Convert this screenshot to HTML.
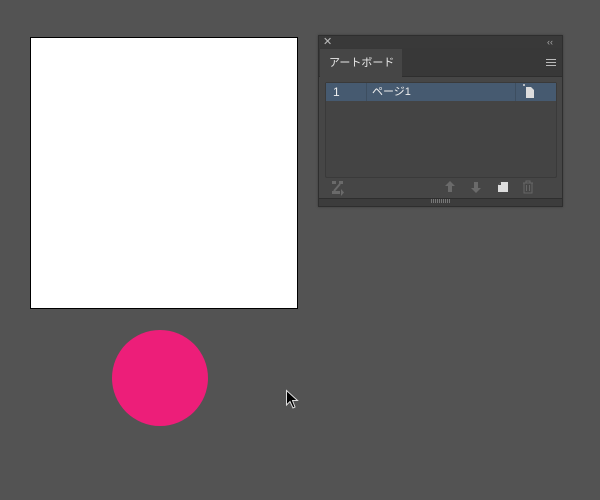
<!DOCTYPE html>
<html><head><meta charset="utf-8"><style>
body{margin:0;width:600px;height:500px;background:#535353;position:relative;overflow:hidden;font-family:"Liberation Sans","Noto Sans CJK JP",sans-serif}
.a{position:absolute}
</style></head><body>
<div class="a" style="left:30px;top:37px;width:266px;height:270px;background:#fff;border:1px solid #000"></div>
<div class="a" style="left:112px;top:330px;width:96px;height:96px;border-radius:50%;background:#ed1e79"></div>
<svg class="a" style="left:285px;top:389px" width="16" height="22"><path d="M1.5 1.5 L1.5 16 L5 12.5 L8 19 L10 18 L7.5 11.5 L12.5 11.5 Z" fill="#000" stroke="#ddd" stroke-width="1"/></svg>

<div class="a" style="left:318px;top:35px;width:245px;height:172px;background:#464646;border:1px solid #2e2e2e;box-sizing:border-box;box-shadow:0 0 2px #3a3a3a"></div>
<div class="a" style="left:319px;top:36px;width:243px;height:12px;background:#393939"></div>
<div class="a" style="left:323px;top:35px;color:#bbb;font-size:11px;line-height:14px">✕</div>
<div class="a" style="left:547px;top:35px;color:#aaa;font-size:9px;line-height:14px">‹‹</div>
<div class="a" style="left:319px;top:48px;width:243px;height:28px;background:#383838;border-bottom:1px solid #2e2e2e"></div>
<div class="a" style="left:320px;top:49px;width:82px;height:28px;background:#464646"></div>
<div class="a" style="left:329px;top:55px;color:#e8e8e8;font-size:11px;line-height:16px">アートボード</div>
<div class="a" style="left:546px;top:59px;width:10px;height:1px;background:#bbb;box-shadow:0 3px 0 #bbb,0 6px 0 #bbb"></div>
<div class="a" style="left:325px;top:82px;width:232px;height:96px;border:1px solid #3a3a3a;border-radius:2px;box-sizing:border-box;background:#444"></div>
<div class="a" style="left:326px;top:83px;width:230px;height:18px;background:#465a70"></div>
<div class="a" style="left:366px;top:83px;width:1px;height:18px;background:#3d4e60"></div>
<div class="a" style="left:515px;top:83px;width:1px;height:18px;background:#3d4e60"></div>
<div class="a" style="left:333px;top:84px;color:#eee;font-size:12px;line-height:16px">1</div>
<div class="a" style="left:372px;top:84px;color:#eee;font-size:11px;line-height:16px">ページ1</div>
<svg class="a" style="left:522px;top:84px" width="14" height="16"><path d="M4 3h5l3 3v8H4z" fill="#ddd"/><path d="M1 1h2M2 0v2" stroke="#ddd"/></svg>
<svg class="a" style="left:331px;top:180px" width="14" height="16" fill="#6a6a6a"><rect x="1" y="1" width="4" height="3"/><rect x="8" y="1" width="4" height="3"/><rect x="1" y="11" width="8" height="3"/><path d="M10 9l3 3.5-3 3.5z"/><path d="M9 4L3 11" stroke="#6a6a6a" stroke-width="2"/></svg>
<svg class="a" style="left:444px;top:180px" width="12" height="14" fill="#6a6a6a"><path d="M6 1l5 5H8v6H4V6H1z"/></svg>
<svg class="a" style="left:470px;top:180px" width="12" height="14" fill="#6a6a6a"><path d="M6 13l5-5H8V2H4v6H1z"/></svg>
<svg class="a" style="left:497px;top:180px" width="12" height="14"><path d="M4 2h7v10H1V5z" fill="#ddd"/><path d="M1 5h3V2" fill="#464646"/></svg>
<svg class="a" style="left:522px;top:180px" width="12" height="14" fill="none" stroke="#666"><path d="M1 3h10M4 3V1h4v2M2 3v10h8V3M4.5 5v6M7.5 5v6"/></svg>
<div class="a" style="left:319px;top:198px;width:243px;height:7px;background:#3c3c3c;border-top:1px solid #2e2e2e"></div>
<div class="a" style="left:431px;top:199px;width:20px;height:4px;background:repeating-linear-gradient(90deg,#777 0 1px,transparent 1px 2px)"></div>
</body></html>
